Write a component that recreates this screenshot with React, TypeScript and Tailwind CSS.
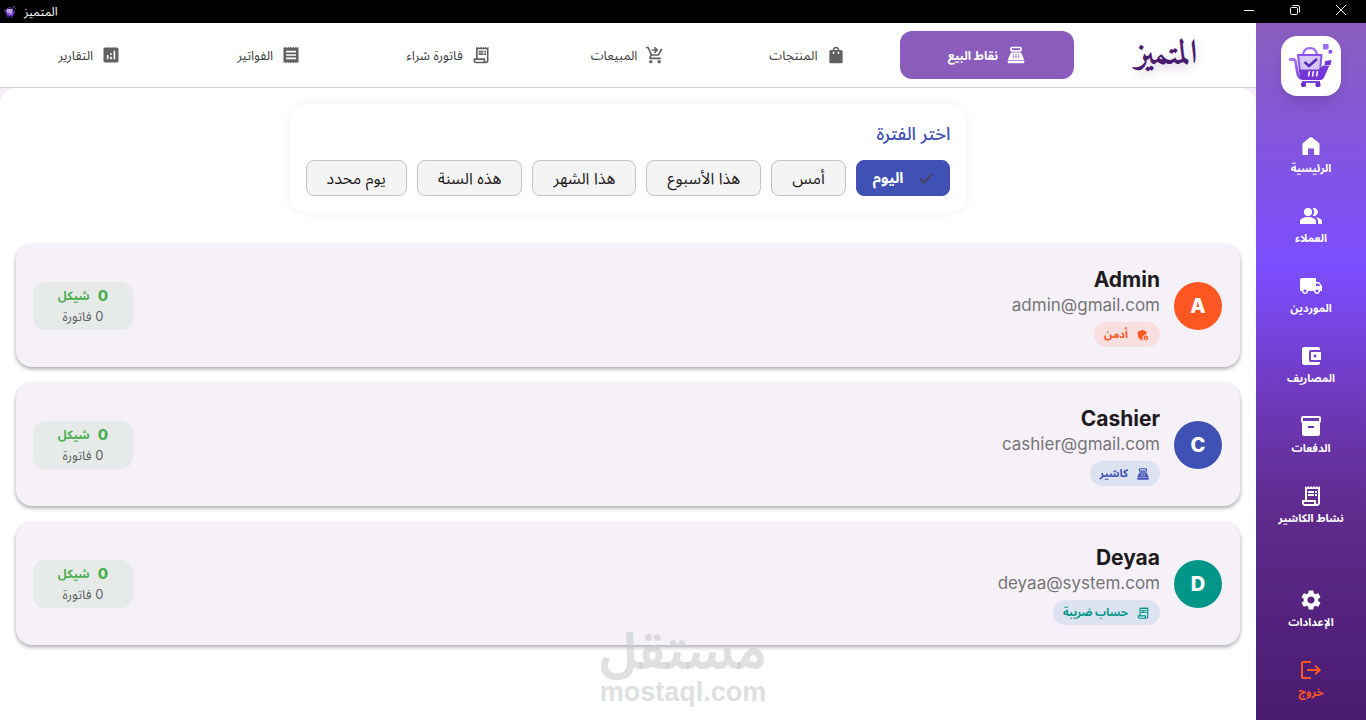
import { useState } from 'react';
import type { ComponentType } from 'react';
import clsx from 'clsx';
import {
  MdAccountBalanceWallet,
  MdAdminPanelSettings,
  MdAnalytics,
  MdInventory2,
  MdLocalShipping,
  MdLogout,
  MdOutlineReceiptLong,
  MdPeopleAlt,
  MdPointOfSale,
  MdReceipt,
  MdSettings,
  MdShoppingBag,
  MdShoppingCartCheckout,
} from 'react-icons/md';

type Icon = ComponentType<{ className?: string }>;

function HomeIcon({ className }: { className?: string }) {
  return (
    <svg viewBox="0 0 24 24" className={className} fill="currentColor" aria-hidden="true">
      <path d="M3.500 10.200c0-.6.3-1.200.8-1.500l6.500-5.100c.7-.5 1.700-.5 2.400 0l6.500 5.100c.5.3.8.9.8 1.500V20c0 .6-.4 1-1 1h-4.500v-6.500h-6V21H4.500c-.6 0-1-.4-1-1z" />
    </svg>
  );
}

const sideItems: { label: string; icon: Icon }[] = [
  { label: 'الرئيسية', icon: HomeIcon },
  { label: 'العملاء', icon: MdPeopleAlt },
  { label: 'الموردين', icon: MdLocalShipping },
  { label: 'المصاريف', icon: MdAccountBalanceWallet },
  { label: 'الدفعات', icon: MdInventory2 },
  { label: 'نشاط الكاشير', icon: MdOutlineReceiptLong },
];

const tabs: { label: string; icon: Icon }[] = [
  { label: 'نقاط البيع', icon: MdPointOfSale },
  { label: 'المنتجات', icon: MdShoppingBag },
  { label: 'المبيعات', icon: MdShoppingCartCheckout },
  { label: 'فاتورة شراء', icon: MdOutlineReceiptLong },
  { label: 'الفواتير', icon: MdReceipt },
  { label: 'التقارير', icon: MdAnalytics },
];

const periods = ['اليوم', 'أمس', 'هذا الأسبوع', 'هذا الشهر', 'هذه السنة', 'يوم محدد'];

const users: { name: string; email: string; role: string; icon: Icon; avatar: string; badge: string }[] = [
  {
    name: 'Admin',
    email: 'admin@gmail.com',
    role: 'أدمن',
    icon: MdAdminPanelSettings,
    avatar: 'bg-[#ff5722]',
    badge: 'bg-[#f9dfe0] text-[#ff5722]',
  },
  {
    name: 'Cashier',
    email: 'cashier@gmail.com',
    role: 'كاشير',
    icon: MdPointOfSale,
    avatar: 'bg-[#3f51b5]',
    badge: 'bg-[#dde2f1] text-[#3f51b5]',
  },
  {
    name: 'Deyaa',
    email: 'deyaa@system.com',
    role: 'حساب ضريبة',
    icon: MdOutlineReceiptLong,
    avatar: 'bg-[#009688]',
    badge: 'bg-[#dde2f1] text-[#009688]',
  },
];

function CartLogo({ className }: { className?: string }) {
  return (
    <svg viewBox="0 0 60 60" className={className} fill="none" aria-hidden="true">
      <defs>
        <linearGradient id="cart" x1="0" y1="0" x2="1" y2="1">
          <stop offset="0" stopColor="#a77bf3" />
          <stop offset="1" stopColor="#6a2fd0" />
        </linearGradient>
      </defs>
      <path d="M22 18.500c1.500-8.500 12.500-8.500 14 0" stroke="#9a6cf0" strokeWidth="2.200" />
      <path d="M17 19h23.500l-1.500 16H19z" fill="#d5c6f7" stroke="#8a52ea" strokeWidth="2" strokeLinejoin="round" />
      <path d="M23.500 26l4.500 4 8-7" stroke="#5b2bb5" strokeWidth="2.600" />
      <path
        d="M9 23.500h3.500c1 0 1.700.6 1.900 1.600L16.500 37c.6 3.500 2.200 5.500 5.500 5.500h18"
        stroke="url(#cart)"
        strokeWidth="2.800"
        strokeLinecap="round"
        strokeLinejoin="round"
      />
      <path d="M18 33.500h20l4-4h6.500l-5.500 12c-.5 1.300-1.500 2-3 2H22c-2 0-2.800-1-3.200-3z" fill="#7436d8" />
      <path d="M28.500 35l-1 5.500M32.500 35l-1 5.500M36.500 35l-1 5.500" stroke="#fff" strokeWidth="1.500" />
      <path d="M21 46h18" stroke="#7436d8" strokeWidth="1.800" />
      <circle cx="22.500" cy="48.500" r="2.600" fill="#6a2fd0" />
      <circle cx="37" cy="48.500" r="2.600" fill="#6a2fd0" />
      <rect x="42" y="8" width="5.600" height="5.400" rx="1" fill="#9a6cf0" />
      <rect x="47.600" y="14" width="3.600" height="3.600" rx="0.600" fill="#8a52ea" />
      <path d="M44 25l6.500-1-1 5h-6z" fill="#7436d8" />
    </svg>
  );
}

function TitleBar() {
  return (
    <div dir="ltr" className="flex h-[23px] shrink-0 items-center justify-between bg-black text-white">
      <div className="flex items-center gap-1.5 pl-0.5">
        <CartLogo className="size-4" />
        <span className="text-xs">المتميز</span>
      </div>
      <div className="flex items-center gap-[34px] pr-[19px] pb-1">
        <button type="button" aria-label="تصغير">
          <svg viewBox="0 0 12 12" className="size-3" fill="none" stroke="currentColor">
            <path d="M1 6.500h10" />
          </svg>
        </button>
        <button type="button" aria-label="استعادة">
          <svg viewBox="0 0 12 12" className="size-3" fill="none" stroke="currentColor">
            <rect x="1.500" y="3.500" width="7" height="7" rx="1" />
            <path d="M3.500 1.500H9a1.500 1.500 0 0 1 1.500 1.500v5.500" />
          </svg>
        </button>
        <button type="button" aria-label="إغلاق">
          <svg viewBox="0 0 12 12" className="size-3" fill="none" stroke="currentColor">
            <path d="M1 1l10 10M11 1L1 11" />
          </svg>
        </button>
      </div>
    </div>
  );
}

function SideLink({ label, icon: Icon, danger }: { label: string; icon: Icon; danger?: boolean }) {
  return (
    <a
      href="#"
      className={clsx(
        'flex h-[70px] flex-col items-center justify-center gap-0.5 text-[11px] leading-4 font-bold',
        danger ? 'text-[#ff5722]' : 'text-white',
      )}
    >
      <Icon className="size-6" />
      {label}
    </a>
  );
}

function Sidebar() {
  return (
    <aside className="flex w-[110px] shrink-0 flex-col bg-[linear-gradient(to_bottom,#8a5dbd_0%,#7c4dff_35%,#6f38b8_55%,#5f2b8d_70%,#4a1a6f_100%)] pt-[13px]">
      <div className="mx-auto mb-6 flex size-[60px] items-center justify-center rounded-2xl bg-white shadow-lg">
        <CartLogo className="size-[60px]" />
      </div>
      <nav className="flex flex-1 flex-col">
        {sideItems.map((item) => (
          <SideLink key={item.label} {...item} />
        ))}
        <div className="mt-auto pb-1.5">
          <SideLink label="الإعدادات" icon={MdSettings} />
          <SideLink label="خروج" icon={MdLogout} danger />
        </div>
      </nav>
    </aside>
  );
}

function Header() {
  const [active, setActive] = useState(0);

  return (
    <header className="grid h-[65px] shrink-0 grid-cols-7 items-center border-b border-[#d5d5d9] bg-white">
      <div className="text-center font-['Amiri','Noto_Naskh_Arabic','DejaVu_Sans',serif] text-[34px] leading-none font-bold text-[#4a1a6f] [text-shadow:2px_4px_8px_#4a1a6f30]">
        المتميز
      </div>
      {tabs.map(({ label, icon: Icon }, i) => (
        <button
          key={label}
          type="button"
          onClick={() => setActive(i)}
          className={clsx(
            'mx-[3px] flex h-12 items-center justify-center gap-2 rounded-xl',
            i === active ? 'bg-[#8a5dbd] text-xs font-bold text-white' : 'text-[13px] text-[#424242]',
          )}
        >
          <Icon className={clsx('size-5', i !== active && 'text-[#616161]')} />
          <span className="pt-0.5">{label}</span>
        </button>
      ))}
    </header>
  );
}

function PeriodPicker() {
  const [selected, setSelected] = useState(0);

  return (
    <section className="mx-auto rounded-2xl bg-white p-4 shadow-[0_0_12px_rgba(0,0,0,0.06)]">
      <h2 className="mb-3 text-lg leading-7 font-medium text-[#3f51b5]">اختر الفترة</h2>
      <div className="flex gap-[10px]">
        {periods.map((period, i) => (
          <button
            key={period}
            type="button"
            onClick={() => setSelected(i)}
            className={clsx(
              'flex h-9 items-center rounded-lg border',
              i === selected
                ? 'gap-4 border-[#3f51b5] bg-[#3f51b5] px-4 text-[15px] font-bold text-white'
                : 'border-[#c5c1d0] bg-[#f4f4f4] px-5 text-base text-[#1d1b20]',
            )}
          >
            {i === selected && (
              <svg viewBox="0 0 14 12" className="h-3 w-3.5" fill="none" stroke="#49454f" strokeWidth="1.800">
                <path d="M1 6.500l4 4L13 2" />
              </svg>
            )}
            {period}
          </button>
        ))}
      </div>
    </section>
  );
}

function UserCard({ name, email, role, icon: Icon, avatar, badge }: (typeof users)[number]) {
  return (
    <article className="flex items-center rounded-2xl bg-[#f6f1f9] py-5 pr-[18px] pl-[17px] shadow-[0_2px_4px_rgba(0,0,0,0.35)]">
      <div className={clsx('flex size-12 shrink-0 items-center justify-center rounded-full text-xl font-extrabold text-white', avatar)}>
        {name[0]}
      </div>
      <div className="mr-[14px] flex flex-col items-start">
        <h3 className="pt-0.5 text-[21px] leading-7 font-bold text-[#1d1b20]">{name}</h3>
        <p className="text-[17px] leading-[22px] text-[#757575]">{email}</p>
        <span className={clsx('mt-1.5 flex h-[25px] items-center gap-2 rounded-full px-[10px] text-[11px] font-bold', badge)}>
          <Icon className="size-3.5" />
          {role}
        </span>
      </div>
      <div className="mr-auto flex h-12 w-[100px] flex-col items-center justify-center rounded-xl bg-[#e6eae9]">
        <p className="flex items-center gap-2 text-xs leading-5 font-bold text-[#4caf50]">
          <span className="text-[15px] leading-5 font-extrabold">0</span> شيكل
        </p>
        <p className="text-[13px] leading-5 text-[#616161]">0 فاتورة</p>
      </div>
    </article>
  );
}

function Watermark() {
  return (
    <div className="pointer-events-none absolute bottom-3.5 left-1/2 flex -translate-x-1/2 flex-col items-center font-bold text-[#c9cccb]/60">
      <span className="text-[50px] leading-[54px]">مستقل</span>
      <span dir="ltr" className="font-['Liberation_Sans',sans-serif] text-[27px] leading-7">
        mostaql.com
      </span>
    </div>
  );
}

export default function App() {
  return (
    <div
      dir="rtl"
      lang="ar"
      className="relative flex min-h-screen flex-col overflow-hidden bg-white font-['Inter','Noto_Sans_Arabic','DejaVu_Sans',sans-serif]"
    >
      <TitleBar />
      <div className="flex flex-1">
        <Sidebar />
        <div className="flex min-w-0 flex-1 flex-col bg-[#f6f1f9]">
          <Header />
          <main className="flex flex-1 flex-col rounded-t-2xl bg-white px-4 pt-4">
            <PeriodPicker />
            <div className="mt-8 flex flex-col gap-4">
              {users.map((user) => (
                <UserCard key={user.email} {...user} />
              ))}
            </div>
          </main>
        </div>
      </div>
      <Watermark />
    </div>
  );
}
